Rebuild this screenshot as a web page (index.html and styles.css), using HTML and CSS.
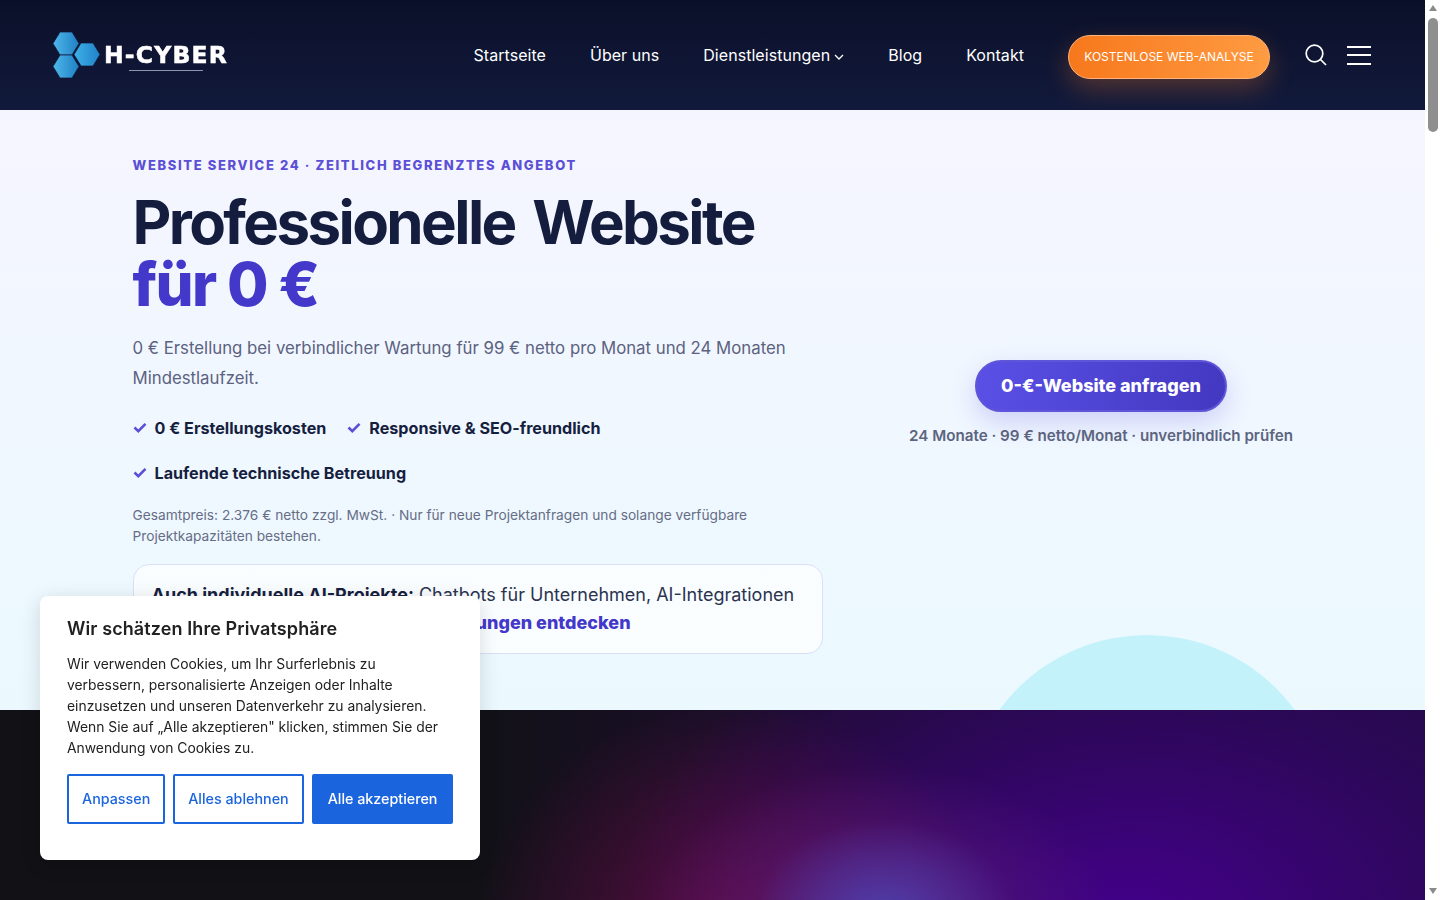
FILE: index.html
```html
<!DOCTYPE html>
<html lang="de">
<head>
<meta charset="utf-8">
<title>H-CYBER</title>
<link rel="stylesheet" href="styles.css">
</head>
<body>
<header class="site-header">
  <a class="logo" href="#">
    <svg class="logo-mark" width="48" height="48" viewBox="0 0 48 48" aria-hidden="true">
      <defs>
        <linearGradient id="hexA" x1="0" y1="0" x2="1" y2="0">
          <stop offset="0" stop-color="#4fb8ea"/><stop offset="1" stop-color="#1f7fc4"/>
        </linearGradient>
        <linearGradient id="hexB" x1="0" y1="0" x2="1" y2="0">
          <stop offset="0" stop-color="#3fb0e8"/><stop offset="1" stop-color="#1f82c8"/>
        </linearGradient>
      </defs>
      <g stroke="#0f1636" stroke-width=".7">
        <polygon points="0,12.5 7,1 19,1 26,12.5 19,24 7,24" fill="url(#hexA)"/>
        <polygon points="0,35.5 7,24 19,24 26,35.5 19,47 7,47" fill="url(#hexA)"/>
        <polygon points="21,23.5 28,12 40,12 47,23.5 40,35 28,35" fill="url(#hexB)"/>
      </g>
    </svg>
    <span class="logo-word">H-CYBER</span>
  </a>
  <nav class="main-nav">
    <a href="#">Startseite</a>
    <a href="#">Über uns</a>
    <a href="#" class="has-caret">Dienstleistungen<svg width="10" height="6" viewBox="0 0 10 6" aria-hidden="true"><path d="M1 1l4 4 4-4" fill="none" stroke="#fff" stroke-width="1.3"/></svg></a>
    <a href="#">Blog</a>
    <a href="#">Kontakt</a>
  </nav>
  <a class="cta-nav" href="#">Kostenlose Web-Analyse</a>
  <svg class="icon-search" width="22" height="22" viewBox="0 0 22 22" aria-hidden="true">
    <circle cx="9.5" cy="9.5" r="8.3" fill="none" stroke="#fff" stroke-width="1.7"/>
    <path d="M15.5 15.5L21 21" fill="none" stroke="#fff" stroke-width="1.7"/>
  </svg>
  <div class="burger"><span></span><span></span><span></span></div>
</header>

<section class="hero">
  <div class="hero-blob"></div>
  <div class="hero-grid">
    <div class="hero-main">
      <p class="eyebrow">Website Service 24 · Zeitlich begrenztes Angebot</p>
      <h1><span class="title-line">Professionelle Website</span><br><span class="accent">für 0 €</span></h1>
      <p class="lead">0 € Erstellung bei verbindlicher Wartung für 99 € netto pro Monat und 24 Monaten Mindestlaufzeit.</p>
      <ul class="checks">
        <li><svg width="14" height="11" viewBox="0 0 14 11" aria-hidden="true"><path d="M1.5 5.5l3.8 3.6L12.5 1.8" fill="none" stroke="#5b4fd6" stroke-width="2.6"/></svg>0 € Erstellungskosten</li>
        <li><svg width="14" height="11" viewBox="0 0 14 11" aria-hidden="true"><path d="M1.5 5.5l3.8 3.6L12.5 1.8" fill="none" stroke="#5b4fd6" stroke-width="2.6"/></svg>Responsive &amp; SEO-freundlich</li>
        <li><svg width="14" height="11" viewBox="0 0 14 11" aria-hidden="true"><path d="M1.5 5.5l3.8 3.6L12.5 1.8" fill="none" stroke="#5b4fd6" stroke-width="2.6"/></svg>Laufende technische Betreuung</li>
      </ul>
      <p class="fineprint">Gesamtpreis: 2.376 € netto zzgl. MwSt. · Nur für neue Projektanfragen und solange verfügbare Projektkapazitäten bestehen.</p>
      <div class="ai-box"><strong>Auch individuelle AI-Projekte:</strong> Chatbots für Unternehmen, AI-Integrationen und Automatisierung auf Anfrage. <a href="#">Lösungen entdecken</a></div>
    </div>
    <div class="hero-side">
      <a class="cta-main" href="#">0-€-Website anfragen</a>
      <p class="side-note">24 Monate · 99 € netto/Monat · unverbindlich prüfen</p>
    </div>
  </div>
</section>

<section class="dark-band"></section>

<aside class="cookie">
  <h2>Wir schätzen Ihre Privatsphäre</h2>
  <p>Wir verwenden Cookies, um Ihr Surferlebnis zu verbessern, personalisierte Anzeigen oder Inhalte einzusetzen und unseren Datenverkehr zu analysieren. Wenn Sie auf „Alle akzeptieren" klicken, stimmen Sie der Anwendung von Cookies zu.</p>
  <div class="cookie-actions">
    <button class="btn-line">Anpassen</button>
    <button class="btn-line">Alles ablehnen</button>
    <button class="btn-fill">Alle akzeptieren</button>
  </div>
</aside>

<div class="scrollbar" aria-hidden="true">
  <span class="arrow-up"></span>
  <span class="thumb"></span>
  <span class="arrow-down"></span>
</div>
</body>
</html>
```
FILE: styles.css
```css
* { box-sizing: border-box; }
body { margin: 0 15px 0 0; font-family: Inter, "Liberation Sans", sans-serif; color: #171f3f; background: #fff; }

.scrollbar {
  position: fixed; top: 0; right: 0; bottom: 0;
  width: 15px;
  background: #fff;
  display: flex; flex-direction: column; align-items: center;
  padding: 5px 0 6px;
}
.arrow-up, .arrow-down { width: 0; height: 0; border-left: 4.5px solid transparent; border-right: 4.5px solid transparent; }
.arrow-up { border-bottom: 6px solid #8a8a8a; }
.arrow-down { border-top: 6px solid #8a8a8a; margin-top: auto; }
.thumb { width: 10px; height: 114px; margin-top: 7px; border-radius: 5px; background: #8f8f8f; }

.site-header {
  height: 110px;
  display: flex;
  align-items: center;
  padding: 0 54px 0 53px;
  background: linear-gradient(180deg, #0b1029 0%, #121a3c 100%);
}
.logo { display: flex; align-items: center; gap: 3px; text-decoration: none; margin-right: auto; position: relative; }
.logo-mark { display: block; }
.logo-word { font-family: "DejaVu Sans", sans-serif; font-weight: 700; font-size: 23.5px; color: #fff; letter-spacing: 1.2px; -webkit-text-stroke: .5px #fff; filter: blur(.3px); }
.logo::after { content: ""; position: absolute; left: 76px; top: 39px; width: 74px; height: 1px; background: #8c93ab; }

.main-nav { display: flex; align-items: center; gap: 44px; }
.main-nav a { color: #fff; text-decoration: none; font-size: 16px; letter-spacing: .05px; white-space: nowrap; }
.has-caret svg { margin-left: 4px; vertical-align: 1px; }

.cta-nav {
  margin: 4px 0 0 44px;
  width: 202px; height: 44px;
  padding-bottom: 2px;
  display: flex; align-items: center; justify-content: center;
  border-radius: 22px;
  border: 1px solid #ffb37a;
  background: linear-gradient(90deg, #f7781c 0%, #ff9b42 100%);
  box-shadow: 0 10px 26px rgba(255, 125, 35, .28);
  color: #fff; text-decoration: none; font-size: 12px; text-transform: uppercase;
}
.icon-search { margin-left: 35px; display: block; }
.burger { margin-left: 20px; width: 24px; height: 19px; display: flex; flex-direction: column; justify-content: space-between; }
.burger span { display: block; height: 2px; background: #fff; }

.hero {
  position: relative;
  height: 600px;
  overflow: hidden;
  background: linear-gradient(180deg, #f5f5ff 0%, #ebf9ff 100%);
  padding: 45px 132.5px 0;
}
.hero-blob { position: absolute; left: 964px; top: 525px; width: 366px; height: 366px; border-radius: 50%; background: #c3f2fb; }
.hero-grid { position: relative; display: grid; grid-template-columns: 690px 1fr; column-gap: 86.5px; align-items: center; }

.eyebrow { margin: 0; font-size: 13px; line-height: 20px; font-weight: 800; letter-spacing: 1.64px; text-transform: uppercase; color: #5b4fd6; }
h1 { margin: 16px 0 0; font-size: 60px; line-height: 62px; font-weight: 800; color: #141d3d; }
.title-line { font-weight: 700; letter-spacing: -2.6px; word-spacing: 6px; }
.accent { color: #4338c9; letter-spacing: -1.6px; }
.lead { margin: 18px 0 0; font-size: 16.8px; line-height: 30px; color: #5b6280; max-width: 670px; }
.checks { list-style: none; margin: 12px 0 0; padding: 0; display: flex; flex-wrap: wrap; column-gap: 21px; }
.checks li { display: flex; align-items: center; gap: 8px; height: 45px; font-size: 16.15px; font-weight: 700; color: #171f3f; }
.fineprint { margin: 10px 0 0; font-size: 13.72px; line-height: 21px; color: #666d85; max-width: 640px; }
.ai-box {
  margin-top: 17px;
  padding: 16px 18px;
  height: 90px;
  border: 1px solid #dbe0f6;
  border-radius: 16px;
  background: rgba(255, 255, 255, .72);
  font-size: 18px; line-height: 28px; color: #2a3350;
}
.ai-box strong { font-weight: 700; color: #171f3f; }
.ai-box a { color: #4338c9; font-weight: 800; text-decoration: none; }

.hero-side { display: flex; flex-direction: column; align-items: center; gap: 14px; margin-top: -4px; }
.cta-main {
  width: 252px; height: 52px;
  display: flex; align-items: center; justify-content: center;
  border-radius: 26px;
  border: 2px solid #5f55d8;
  background: linear-gradient(100deg, #5a50e6 0%, #4338c0 100%);
  box-shadow: 0 10px 26px rgba(82, 72, 220, .22);
  color: #fff; font-size: 18px; font-weight: 800; text-decoration: none;
}
.side-note { margin: 0; font-size: 15.2px; line-height: 20px; font-weight: 600; color: #5c6480; white-space: nowrap; }

.dark-band {
  height: 6090px;
  background-color: #111116;
  background-repeat: no-repeat;
  background-image:
    radial-gradient(ellipse 130px 95px at 885px 205px, rgba(78, 62, 170, 1), rgba(78, 62, 170, 0)),
    radial-gradient(ellipse 230px 150px at 880px 205px, rgba(95, 30, 125, .8), rgba(95, 30, 125, 0)),
    radial-gradient(ellipse 260px 220px at 735px 215px, rgba(120, 12, 75, .65), rgba(120, 12, 75, 0)),
    radial-gradient(ellipse 520px 340px at 1130px 215px, rgba(68, 0, 140, 1), rgba(50, 5, 105, .6) 65%, rgba(36, 11, 70, 0)),
    linear-gradient(90deg, #111116 33%, #1f0d30 58%, #240b45 100%);
  background-size: 100% 900px;
}

.cookie {
  position: fixed; left: 40px; bottom: 40px;
  width: 440px; height: 264px;
  padding: 22px 27px;
  background: #fff;
  border-radius: 8px;
  box-shadow: 0 4px 20px rgba(0, 0, 0, .14);
  color: #212121;
}
.cookie h2 { margin: 0; font-size: 18px; line-height: 22px; font-weight: 600; letter-spacing: .1px; }
.cookie p { margin: 14px 0 0; font-size: 13.87px; line-height: 21px; }
.cookie-actions { display: flex; gap: 8px; margin-top: 15px; }
.cookie button { flex: none; white-space: nowrap; height: 50px; padding: 0 13px 2px; border: 2px solid #1a64de; border-radius: 2px; font: 500 14.3px Inter, sans-serif; }
.btn-line { background: #fff; color: #1a64de; }
.cookie .btn-fill { background: #1a64de; color: #fff; padding: 0 14px 2px; }
```
